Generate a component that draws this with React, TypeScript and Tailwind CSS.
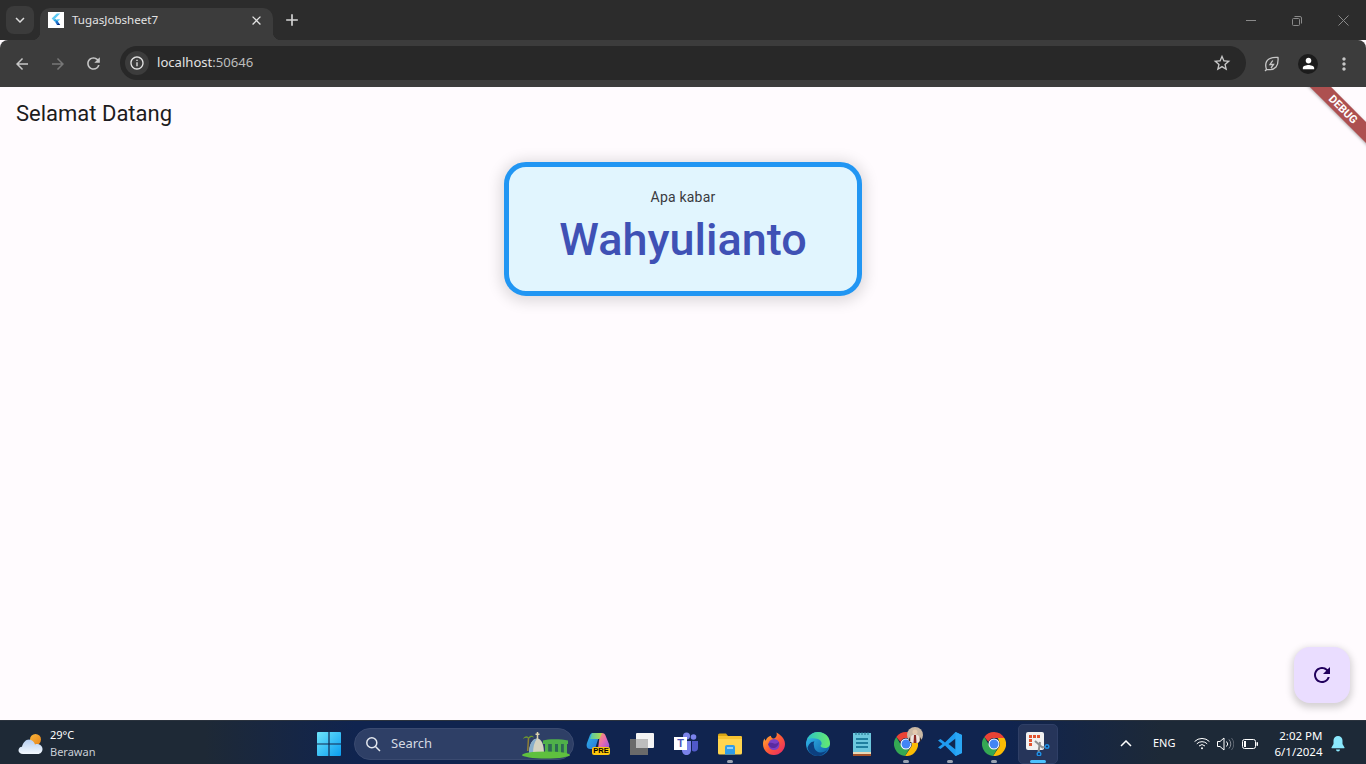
import React from "react";
import { MdArrowBack, MdArrowForward, MdRefresh, MdStarBorder, MdInfoOutline, MdPerson, MdMoreVert, MdClose, MdAdd, MdKeyboardArrowDown } from "react-icons/md";

const FlutterLogo = () => (
  <svg width="16" height="16" viewBox="0 0 16 16">
    <rect width="16" height="16" fill="#fff" />
    <path d="M8.800 1.500h3.400L5.400 8.300 3.700 6.600z" fill="#5ccbf5" />
    <path d="M8.800 7.300h3.400L8.900 10.600 7.200 8.900z" fill="#5ccbf5" />
    <path d="M5.400 8.300l1.800-1.600 1.700 1.700-1.700 1.700z" fill="#2aa5e0" />
    <path d="M7.200 10.100l1.700-1.700.9.900 2.400 3.700H9z" fill="#1f6fc9" />
    <path d="M9 13h3.200l-1.800-1.800z" fill="#0b2a80" />
  </svg>
);

const Weather = () => (
  <svg width="26" height="22" viewBox="0 0 26 22">
    <defs>
      <linearGradient id="wsun" x1="0" y1="0" x2="1" y2="1">
        <stop offset="0" stopColor="#f9b53a" />
        <stop offset="1" stopColor="#e8851a" />
      </linearGradient>
      <linearGradient id="wcl" x1="0" y1="0" x2="0" y2="1">
        <stop offset="0" stopColor="#b4cdf0" />
        <stop offset=".6" stopColor="#dbe8f8" />
        <stop offset="1" stopColor="#f3f8fe" />
      </linearGradient>
    </defs>
    <circle cx="17.500" cy="6.500" r="5.500" fill="url(#wsun)" />
    <path d="M5 21c-3 0-4.500-1.700-4.500-3.700 0-2 1.500-3.500 3.500-3.600C5 9.800 7.500 6.500 11 6.500c3 0 5 2.400 6 5 .8-.5 1.500-.6 2.200-.6 2.800 0 5.300 2.200 5.300 5.100 0 2.800-2 5-4.700 5z" fill="url(#wcl)" />
  </svg>
);

const WinLogo = () => (
  <svg width="24" height="24" viewBox="0 0 24 24">
    <defs>
      <linearGradient id="wl" x1="0" y1="0" x2="1" y2="1">
        <stop offset="0" stopColor="#6ee4fb" />
        <stop offset="1" stopColor="#0a9cf0" />
      </linearGradient>
    </defs>
    <path d="M0 1a1 1 0 011-1h10.400v11.400H0zM12.600 0H23a1 1 0 011 1v10.400H12.600zM0 12.600h11.400V24H1a1 1 0 01-1-1zM12.600 12.600H24V23a1 1 0 01-1 1H12.600z" fill="url(#wl)" />
  </svg>
);

const SearchArt = () => (
  <svg width="50" height="28" viewBox="0 0 50 28">
    <path d="M6.500 7l-.8 13" stroke="#8f7f35" strokeWidth="1.500" fill="none" />
    <path d="M1 8c1.500-3 4-3.500 5.500-1.500C8 4 11 4 12 6.500 10 5.500 8.500 6 7 7.500 5.500 6.500 3 6.500 1 8z" fill="#6f9a2e" />
    <path d="M7 23c0-9 3-15 8-15.500 5 0 7 7 7 15.500z" fill="#d5d3c0" />
    <path d="M7 23c0-9 3-15 8-15.500-3 4-4 9-4 15.500z" fill="#88aecb" />
    <path d="M15.500 1v7M13.500 3.200h4" stroke="#dcd2ad" strokeWidth="1.500" />
    <path d="M21 9.500c5-1.800 18-1.800 25 0v3.500H21z" fill="#4fb04a" />
    <path d="M23 13h3.500v10H23zM29.500 13H33v10h-3.500zM36 13h3v10h-3zM41.500 13H45v10h-3.500z" fill="#4fb04a" />
    <path d="M26.500 13h3v10h-3zM33 13h3v10h-3zM39 13h2.500v10H39z" fill="#2c6a52" />
    <ellipse cx="24" cy="24" rx="24" ry="3.500" fill="#5fc03e" />
  </svg>
);

const Copilot = () => (
  <div className="relative w-6 h-6">
    <svg width="24" height="20" viewBox="0 0 24 20">
      <defs>
        <linearGradient id="cp1" x1="0" y1="0" x2="1" y2="1">
          <stop offset="0" stopColor="#2bb7e8" />
          <stop offset="1" stopColor="#2a6fd8" />
        </linearGradient>
        <linearGradient id="cp2" x1="0" y1="0" x2="1" y2="1">
          <stop offset="0" stopColor="#f7a25f" />
          <stop offset=".5" stopColor="#e86bb0" />
          <stop offset="1" stopColor="#8f55e0" />
        </linearGradient>
        <linearGradient id="cp3" x1="0" y1="0" x2="1" y2="0">
          <stop offset="0" stopColor="#4fc8b0" />
          <stop offset="1" stopColor="#b5dd45" />
        </linearGradient>
      </defs>
      <path d="M7 1h7l-5 16H4C1 17 0 14 1 11L4 3c.5-1.300 1.500-2 3-2z" fill="url(#cp1)" />
      <path d="M14 1h2c2 0 3 1 3.500 2.500L23 12c1 3-1 5-3 5h-8z" fill="url(#cp2)" />
      <path d="M6 1h10l-2.500 6H4z" fill="url(#cp3)" />
    </svg>
    <div className="absolute left-[6px] top-[15px] w-[18px] h-[8px] rounded-[2px] bg-[#fdc70c] text-[7.500px] leading-[8px] font-bold text-center text-black font-['Liberation_Sans',sans-serif]">PRE</div>
  </div>
);

const TaskView = () => (
  <svg width="24" height="22" viewBox="0 0 24 22">
    <rect x="0" y="6" width="18" height="16" fill="#6a6a6a" />
    <rect x="6" y="0" width="18" height="15" rx="1" fill="#f4f4f4" />
    <rect x="6" y="6" width="12" height="9" fill="#bdbdbd" />
  </svg>
);

const Teams = () => (
  <div className="relative w-6 h-6">
    <svg width="24" height="24" viewBox="0 0 24 24">
      <circle cx="19.500" cy="5" r="2.800" fill="#7b83eb" />
      <circle cx="12.500" cy="4" r="3.500" fill="#7b83eb" />
      <path d="M8 9h9v9c0 3-2 5-4.500 5S8 21 8 18z" fill="#7b83eb" />
      <path d="M18 9h6v7c0 2-1.500 3.500-3.500 3.500-1 0-2-.4-2.500-1z" fill="#5059c9" />
    </svg>
    <div className="absolute left-0 top-[5px] w-[13px] h-[13px] bg-white text-[#4b53bc] text-[11px] leading-[13px] font-bold text-center font-['Liberation_Sans',sans-serif]">T</div>
  </div>
);

const Explorer = () => (
  <svg width="24" height="22" viewBox="0 0 24 22">
    <path d="M0 2a1.500 1.500 0 011.500-1.500H8L10 3H0z" fill="#d9a514" />
    <path d="M0 3h22.500A1.500 1.500 0 0124 4.500V20a1.500 1.500 0 01-1.500 1.500h-21A1.500 1.500 0 010 20z" fill="#ffd54f" />
    <path d="M0 6h24v-1.500A1.500 1.500 0 0022.500 3H0z" fill="#f7c331" />
    <path d="M7 14a2 2 0 012-2h6a2 2 0 012 2v7.500H7z" fill="#2f9ce8" />
    <rect x="9" y="14" width="6" height="2" fill="#8fd0f7" />
  </svg>
);

const Firefox = () => (
  <svg width="24" height="24" viewBox="0 0 24 24">
    <defs>
      <linearGradient id="ff" x1="0" y1="0" x2="1" y2="1">
        <stop offset="0" stopColor="#ffbd2e" />
        <stop offset=".5" stopColor="#ff5a36" />
        <stop offset="1" stopColor="#e3246e" />
      </linearGradient>
    </defs>
    <path d="M12 23C5.500 23 1 18 1 12c0-2 .5-4 1.500-5.500.2 1 .6 1.800 1.200 2.300C4.500 6 7 4 9 3.800 8.800 5 9.500 6 11 6.500c2 .5 2.500-1 3.500-2.500.5-1.200.3-2.500-.2-3.500C18 2.500 23 6 23 12c0 6-5 11-11 11z" fill="url(#ff)" />
    <circle cx="12" cy="12.500" r="5.500" fill="#7b3fc4" />
    <path d="M6 12c2-2 4-1 6-.5 2 .5 3 0 5-1.500-.5 4-3 6-6 6-2.500 0-4.500-2-5-4z" fill="#5a2aa0" />
  </svg>
);

const Edge = () => (
  <svg width="24" height="24" viewBox="0 0 24 24">
    <defs>
      <linearGradient id="ed1" x1="0" y1="0" x2="1" y2="1">
        <stop offset="0" stopColor="#35c1f1" />
        <stop offset="1" stopColor="#0c59a4" />
      </linearGradient>
      <linearGradient id="ed2" x1="0" y1="0" x2="1" y2="0">
        <stop offset="0" stopColor="#2cc3c3" />
        <stop offset="1" stopColor="#66eb6e" />
      </linearGradient>
    </defs>
    <circle cx="12" cy="12" r="12" fill="url(#ed1)" />
    <path d="M1 8C3 3 7 0 12 0c7 0 12 5 12 11.500 0 2.500-2 4.500-5 4.500-3 0-4.500-1-4.500-2.500 2-1 1.500-5-2.500-6.500C7.500 5.500 3 6 1 8z" fill="url(#ed2)" />
    <path d="M8 14c0 3 2.500 6 6 6.500 3 .3 5.500-1 7-3-2 4-5.500 6.500-9.500 6.500-5 0-9-4-10-8 1-4 4-7 7-6.500-1 1-1 2.500-.5 4.500z" fill="#0c3f7f" />
  </svg>
);

const Notepad = () => (
  <svg width="20" height="24" viewBox="0 0 20 24">
    <rect x="1" y="1" width="18" height="20" fill="#6cc7dd" />
    <path d="M4 0v3M7 0v3M10 0v3M13 0v3M16 0v3" stroke="#1f6f8b" strokeWidth="1" />
    <path d="M4 7h12M4 11h12M4 15h12" stroke="#1f7f9f" strokeWidth="1.800" />
    <rect x="1" y="20" width="18" height="2" fill="#e8d9b8" />
    <rect x="1" y="22" width="18" height="2" fill="#a5532a" />
  </svg>
);

const Chrome = ({ id }: { id: string }) => (
  <svg width="24" height="24" viewBox="0 0 24 24" aria-label={id}>
    <path d="M12 0a12 12 0 0110.400 6H12a6 6 0 00-5.600 3.800L2.300 5A12 12 0 0112 0z" fill="#ea4335" />
    <path d="M22.400 6A12 12 0 0111 24l5.200-7.800A6 6 0 0017 9a6 6 0 00-1.400-3z" fill="#fbbc04" />
    <path d="M11 24A12 12 0 012.300 5l5 8.400a6 6 0 008 3.400z" fill="#34a853" />
    <circle cx="12" cy="12" r="5.500" fill="#fff" />
    <circle cx="12" cy="12" r="4.500" fill="#4285f4" />
  </svg>
);

const VSCode = () => (
  <svg width="24" height="24" viewBox="0 0 24 24">
    <path d="M17.500 0L24 3v18l-6.500 3L7 13.500l-4.500 3.500L0 15.500 4.500 12 0 8.500 2.500 7 7 10.500z" fill="#1f9cf0" />
    <path d="M17.500 6.500L10.500 12l7 5.500z" fill="#10284f" />
    <path d="M17.500 0L24 3v18l-6.500 3z" fill="#2aa7f5" />
  </svg>
);

const Snip = () => (
  <svg width="24" height="24" viewBox="0 0 24 24">
    <rect x="0" y="0" width="18" height="18" rx="2" fill="#f1f1f1" />
    <path d="M3 3h3v3H3zM7 3h3v3H7zM11 3h3v3h-3zM3 7h3v3H3zM3 11h3v3H3z" fill="#e2532f" />
    <path d="M9 9l8 7" stroke="#8f8f8f" strokeWidth="2" />
    <path d="M14 10l-1.500 10" stroke="#8f8f8f" strokeWidth="2" />
    <path d="M16 15h4" stroke="#8f8f8f" strokeWidth="1.500" />
    <circle cx="21" cy="14.500" r="2.500" fill="#1e90e6" />
    <circle cx="13" cy="22" r="2.500" fill="#1e90e6" />
    <circle cx="21" cy="14.500" r="1" fill="#0f2350" />
    <circle cx="13" cy="22" r="1" fill="#0f2350" />
  </svg>
);

const Avatar = () => (
  <svg width="16" height="16" viewBox="0 0 16 16">
    <circle cx="8" cy="8" r="8" fill="#c9b8a4" />
    <circle cx="8" cy="5" r="2.500" fill="#e3c9ad" />
    <path d="M4 16v-6c0-1.500 1.500-2.500 4-2.500s4 1 4 2.500v6z" fill="#efe6e0" />
    <path d="M7 8h2l.5 8h-3z" fill="#8c2b25" />
    <path d="M1.500 13a8 8 0 0013 0l-1.500-3v6H3v-6z" fill="#2a2226" />
  </svg>
);

const Bell = () => (
  <svg width="14" height="16" viewBox="0 0 14 16">
    <path d="M7 0a4.500 4.500 0 014.500 4.500V8l2 3.500a.5.5 0 01-.4.7H.9a.5.5 0 01-.4-.7L2.500 8V4.500A4.500 4.500 0 017 0z" fill="#8be8fd" />
    <path d="M5 13.500h4a2 2 0 01-4 0z" fill="#8be8fd" />
  </svg>
);

const Wifi = () => (
  <svg width="16" height="13" viewBox="0 0 16 13" fill="none" stroke="#fff" strokeWidth="1">
    <path d="M.6 4.500a10.500 10.500 0 0114.800 0" />
    <path d="M2.800 6.800a7.400 7.400 0 0110.400 0" />
    <path d="M5 9a4.300 4.300 0 016 0" />
    <circle cx="8" cy="11.300" r="1" fill="#fff" stroke="none" />
  </svg>
);

const Volume = () => (
  <svg width="17" height="14" viewBox="0 0 17 14" fill="none" stroke="#fff" strokeWidth="1">
    <path d="M.5 4.500h2.500L7 1v12L3 9.500H.5z" />
    <path d="M9.500 4.500a3.500 3.500 0 010 5" />
    <path d="M12 2.500a6.500 6.500 0 010 9" stroke="#8a9099" />
    <path d="M14.500 1a9 9 0 010 12" stroke="#5c6470" />
  </svg>
);

const Battery = () => (
  <svg width="16" height="10" viewBox="0 0 16 10" fill="none">
    <rect x=".5" y=".5" width="13" height="9" rx="2" stroke="#fff" />
    <rect x="2" y="2" width="2" height="6" fill="#fff" />
    <rect x="14.500" y="3" width="1.500" height="4" rx=".7" fill="#fff" />
  </svg>
);

const Spark = () => (
  <svg width="16" height="16" viewBox="0 0 16 16" fill="none" stroke="#c7c7c7" strokeWidth="1.300">
    <path d="M2.500 13.500C1 9 2 5 5 3c2.500-1.500 6-1.700 9-1.500.3 3.500 0 7-2 9.500-2.200 2.500-6 3-9.500 2.500z" />
    <path d="M8.800 4.500L6 8.500h3.500L7 12" />
    <path d="M1 15l2-2" />
  </svg>
);

const TaskIcon = ({ children, dot, active }: { children: React.ReactNode; dot?: boolean; active?: boolean }) => (
  <div className="relative w-11 h-10 flex items-center justify-center">
    {active && <span className="absolute inset-y-0 left-[2px] right-[2px] rounded-[5px] bg-[#26355a] border border-[#2f3f66]" />}
    <span className="relative flex items-center justify-center">{children}</span>
    {dot && <span className="absolute bottom-[1px] left-1/2 -translate-x-1/2 w-[6px] h-[3px] rounded-full bg-[#9aa3b2]" />}
    {active && <span className="absolute bottom-[1px] left-1/2 -translate-x-1/2 w-4 h-[3px] rounded-full bg-[#4cc2ff]" />}
  </div>
);

export default function App() {
  return (
    <div className="w-[1366px] h-[764px] overflow-hidden flex flex-col bg-[#fffbfe] font-['Roboto',sans-serif]">
      {/* tab strip */}
      <div className="h-10 shrink-0 bg-[#2c2c2c] flex items-end font-['Noto_Sans',sans-serif]">
        <div className="h-full flex items-start pt-[6px] pl-[6px]">
          <div className="w-7 h-7 rounded-lg bg-[#3b3b3b] flex items-center justify-center text-[#dcdcdc]">
            <MdKeyboardArrowDown size={18} />
          </div>
        </div>
        <div className="relative ml-[6px] w-[233px] h-8 rounded-t-[10px] bg-[#3c3c3c] flex items-center pl-[8px] pr-[9px] pb-2">
          <span className="absolute left-[-8px] bottom-0 w-2 h-2 bg-[radial-gradient(circle_at_0_0,transparent_8px,#3c3c3c_8.500px)]" />
          <span className="absolute right-[-8px] bottom-0 w-2 h-2 bg-[radial-gradient(circle_at_100%_0,transparent_8px,#3c3c3c_8.500px)]" />
          <FlutterLogo />
          <span className="ml-[8px] flex-1 text-[11.600px] text-[#e3e3e3]">TugasJobsheet7</span>
          <MdClose size={15} className="text-[#e3e3e3]" />
        </div>
        <div className="ml-[7px] h-8 w-6 pb-2 flex items-center justify-center text-[#d5d5d5]">
          <MdAdd size={20} />
        </div>
        <div className="flex-1 h-full flex items-start justify-end pt-[12px] text-[#8a8a8a]">
          <div className="w-[46px] flex justify-center pt-[8px]"><div className="w-[10px] h-px bg-[#8a8a8a]" /></div>
          <div className="w-[46px] flex justify-center">
            <svg width="10" height="10" viewBox="0 0 10 10" fill="none" stroke="#8a8a8a" strokeWidth="1" className="mt-[4px]">
              <rect x=".5" y="2.500" width="7" height="7" rx="1" />
              <path d="M2.500 .5h5.500a1.500 1.500 0 011.500 1.500v5.500" />
            </svg>
          </div>
          <div className="w-[46px] flex justify-center">
            <svg width="11" height="11" viewBox="0 0 11 11" stroke="#8a8a8a" strokeWidth="1" className="mt-[3px]"><path d="M.5 .5l10 10M10.500 .5l-10 10" /></svg>
          </div>
        </div>
      </div>

      {/* toolbar */}
      <div className="h-[47px] shrink-0 bg-[#3c3c3c] rounded-t-[8px] flex items-center pl-[13px] font-['Noto_Sans',sans-serif]">
        <MdArrowBack size={18} className="text-[#c7c7c7]" />
        <MdArrowForward size={18} className="ml-[18px] text-[#777777]" />
        <MdRefresh size={19} className="ml-[17px] text-[#c7c7c7]" />
        <div className="ml-[17px] mb-[1px] w-[1126px] h-[34px] rounded-full bg-[#282828] flex items-center pl-[5px] pr-[14px]">
          <div className="w-6 h-6 rounded-full bg-[#3c3c3c] flex items-center justify-center text-[#e3e3e3]">
            <MdInfoOutline size={16} />
          </div>
          <span className="ml-[8px] flex-1 text-[13.100px] text-[#e3e3e3]">localhost<span className="text-[#bdbdbd]">:50646</span></span>
          <MdStarBorder size={20} className="text-[#c7c7c7]" />
        </div>
        <div className="ml-[18px] w-4 flex justify-center"><Spark /></div>
        <div className="ml-[18px] w-5 h-5 rounded-full bg-[#1c1c1c] flex items-center justify-center text-white">
          <MdPerson size={17} />
        </div>
        <MdMoreVert size={20} className="ml-[16px] text-[#c7c7c7]" />
      </div>

      {/* page */}
      <main className="relative flex-1 overflow-hidden flex flex-col items-center">
        <header className="self-stretch h-[56px] pl-4 flex items-center text-[#1d1b20] text-[22px] -mt-[2px]">Selamat Datang</header>
        <div className="mt-[21px] w-[358px] h-[134px] box-border rounded-[22px] border-[5px] border-[#2196f3] bg-[#e1f5fe] shadow-[0_2px_14px_4px_rgba(0,0,0,0.13)] flex flex-col items-center">
          <div className="mt-[20px] text-[14px] leading-[20px] tracking-[0.2px] text-[#3a3a3e]">Apa kabar</div>
          <div className="mt-[5px] text-[45px] leading-[56px] font-medium text-[#3f51b5]">Wahyulianto</div>
        </div>
        <div className="absolute right-[-32px] top-[15px] w-[110px] h-[15px] rotate-45 bg-[#ad5050] text-white text-[11px] leading-[15px] font-bold text-center shadow-[0_1px_3px_rgba(0,0,0,0.3)]">DEBUG</div>
        <div className="absolute right-4 bottom-[17px] w-14 h-14 rounded-2xl bg-[#eaddff] shadow-[0_3px_7px_2px_rgba(0,0,0,0.17)] flex items-center justify-center text-[#21005d]">
          <MdRefresh size={24} />
        </div>
      </main>

      {/* taskbar */}
      <footer className="h-11 shrink-0 border-t border-[#2b333e] pt-[2px] bg-[linear-gradient(90deg,#1e2936_0%,#1e2936_15%,#10244f_26%,#10244f_74%,#1d2937_85%,#1d2937_100%)] flex items-center font-['Noto_Sans',sans-serif] relative">
        <div className="w-[307px] flex items-center pl-[18px]">
          <Weather />
          <div className="ml-[6px] flex flex-col leading-[17px] -mt-[1px]">
            <span className="text-[11px] text-white">29°C</span>
            <span className="text-[11px] text-[#c9ced6]">Berawan</span>
          </div>
        </div>
        <TaskIcon><WinLogo /></TaskIcon>
        <div className="ml-[3px] mr-[2px] w-[220px] h-8 rounded-full bg-[#2e3f66] border border-[#3a4a70] flex items-center pl-[10px] relative">
          <svg width="16" height="16" viewBox="0 0 16 16" fill="none" stroke="#e4e8ef" strokeWidth="1.500"><circle cx="6.800" cy="6.800" r="5" /><path d="M10.500 10.500l4.500 4.500" /></svg>
          <span className="ml-[10px] text-[13px] text-[#d5dae3]">Search</span>
          <div className="absolute right-[1px] top-[2px]"><SearchArt /></div>
        </div>
        <TaskIcon><Copilot /></TaskIcon>
        <TaskIcon><TaskView /></TaskIcon>
        <TaskIcon><Teams /></TaskIcon>
        <TaskIcon dot><Explorer /></TaskIcon>
        <TaskIcon><Firefox /></TaskIcon>
        <TaskIcon><Edge /></TaskIcon>
        <TaskIcon><Notepad /></TaskIcon>
        <TaskIcon dot>
          <Chrome id="chrome-a" />
          <span className="absolute right-[-5px] top-[-5px]"><Avatar /></span>
        </TaskIcon>
        <TaskIcon dot><VSCode /></TaskIcon>
        <TaskIcon dot><Chrome id="chrome-b" /></TaskIcon>
        <TaskIcon active><Snip /></TaskIcon>
        <div className="flex-1 flex items-center text-white">
          <svg width="12" height="7" viewBox="0 0 12 7" fill="none" stroke="#fff" strokeWidth="1.500" className="ml-[60px]"><path d="M1 6l5-5 5 5" /></svg>
          <span className="ml-[21px] text-[11px]">ENG</span>
          <div className="ml-[19px]"><Wifi /></div>
          <div className="ml-[7px]"><Volume /></div>
          <div className="ml-[8px]"><Battery /></div>
          <div className="ml-[14px] w-[50px] flex flex-col items-end text-[11.500px] leading-[16px]">
            <span>2:02 PM</span>
            <span>6/1/2024</span>
          </div>
          <div className="ml-[9px]"><Bell /></div>
        </div>
      </footer>
    </div>
  );
}
